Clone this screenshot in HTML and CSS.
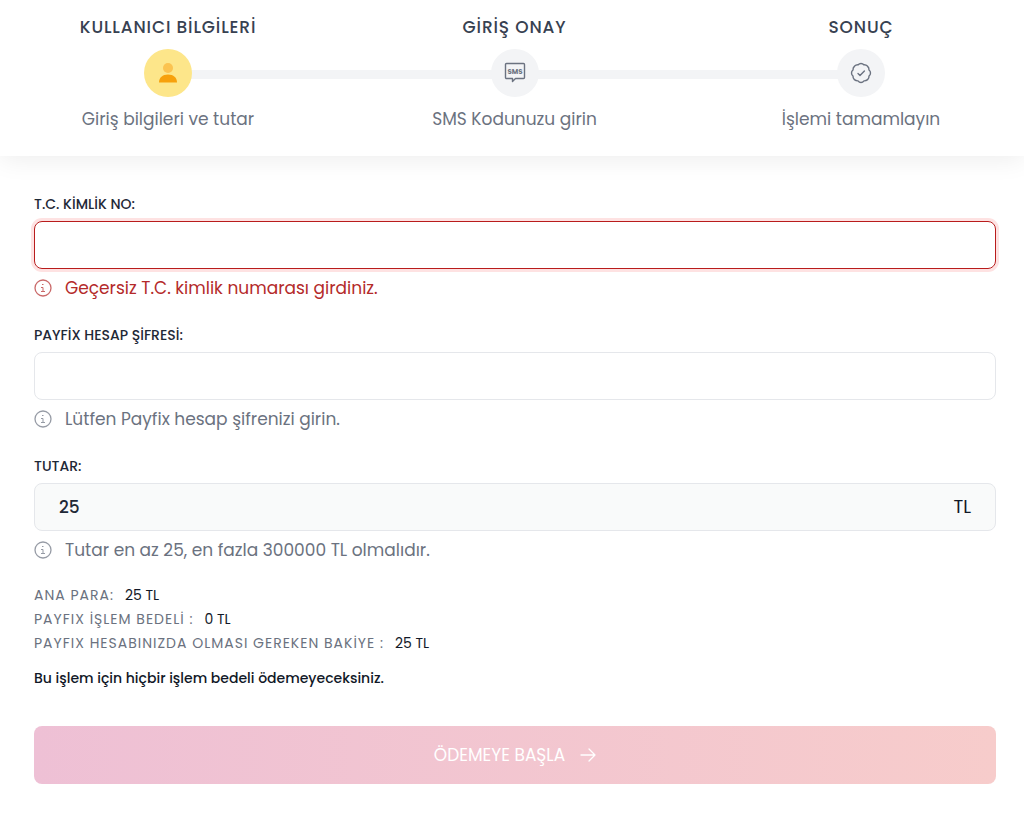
FILE: index.html
```html
<!DOCTYPE html>
<html lang="tr">
<head>
  <meta charset="utf-8">
  <meta name="viewport" content="width=device-width, initial-scale=1">
  <title>Payfix</title>
  <link rel="stylesheet" href="styles.css">
</head>

<body>

  <header class="header">
    <ol class="steps">
      <li class="step active">
        <h2>KULLANICI BİLGİLERİ</h2>
        <span class="step-icon">
          <svg width="20" height="20" viewBox="0 0 20 20">
            <circle cx="10" cy="5" r="5" fill="#fbc350"/>
            <path d="M1 19.5C1 14.5 4.500 11.500 10 11.500s9 3 9 8z" fill="#f7a10c"/>
          </svg>
        </span>
        <p>Giriş bilgileri ve tutar</p>
      </li>
      <li class="step">
        <h2>GİRİŞ ONAY</h2>
        <span class="step-icon">
          <svg width="22" height="22" viewBox="0 0 22 22" fill="none" stroke="#6b7280">
            <path d="M3 1.500h16.500a1 1 0 0 1 1 1v13a1 1 0 0 1-1 1h-8L8.500 19.500v-3H2.500a1 1 0 0 1-1-1v-13a1 1 0 0 1 1-1z" stroke-width="1.400" stroke-linejoin="round"/>
            <text class="sms" x="11" y="11.500" text-anchor="middle">SMS</text>
          </svg>
        </span>
        <p>SMS Kodunuzu girin</p>
      </li>
      <li class="step">
        <h2>SONUÇ</h2>
        <span class="step-icon">
          <svg width="22" height="22" viewBox="0 0 22 22" fill="none" stroke="#6b7280" stroke-width="1.400" stroke-linecap="round" stroke-linejoin="round">
            <path d="M11 1.500Q12.800 1.500 13.800 2.800Q16 2.600 17.400 4.100Q19.200 5.600 19 8Q20.500 9.200 20.500 11Q20.500 12.900 19 14Q19.200 16.200 17.600 17.600Q16 19 14 18.900Q12.800 20.500 11 20.500Q9.200 20.500 8 18.900Q6 19 4.400 17.600Q2.800 16.200 3 14Q1.500 12.900 1.500 11Q1.500 9.200 3 8Q2.800 5.600 4.600 4.100Q6 2.600 8.200 2.800Q9.200 1.500 11 1.500z"/>
            <path d="M8 11.500l2 2 4.400-4.400"/>
          </svg>
        </span>
        <p>İşlemi tamamlayın</p>
      </li>
    </ol>
  </header>

  <form class="payment">

    <div class="field invalid">
      <label for="identity">T.C. KİMLİK NO:</label>
      <div class="control"><input id="identity" type="text" aria-describedby="identity-hint"></div>
      <p class="hint" id="identity-hint">
        <svg width="18" height="18" viewBox="0 0 18 18" fill="none" stroke="currentColor">
          <circle cx="9" cy="9" r="8" stroke-width="1.300"/>
          <path d="M7 8.500h2v4M7 12.500h4M8 5.500h1.500"/>
        </svg>
        <span>Geçersiz T.C. kimlik numarası girdiniz.</span>
      </p>
    </div>

    <div class="field">
      <label for="password">PAYFİX HESAP ŞİFRESİ:</label>
      <div class="control"><input id="password" type="password" aria-describedby="password-hint"></div>
      <p class="hint" id="password-hint">
        <svg width="18" height="18" viewBox="0 0 18 18" fill="none" stroke="currentColor">
          <circle cx="9" cy="9" r="8" stroke-width="1.300"/>
          <path d="M7 8.500h2v4M7 12.500h4M8 5.500h1.500"/>
        </svg>
        <span>Lütfen Payfix hesap şifrenizi girin.</span>
      </p>
    </div>

    <div class="field filled">
      <label for="amount">TUTAR:</label>
      <div class="control">
        <input id="amount" type="text" value="25" aria-describedby="amount-hint">
        <span class="currency">TL</span>
      </div>
      <p class="hint" id="amount-hint">
        <svg width="18" height="18" viewBox="0 0 18 18" fill="none" stroke="currentColor">
          <circle cx="9" cy="9" r="8" stroke-width="1.300"/>
          <path d="M7 8.500h2v4M7 12.500h4M8 5.500h1.500"/>
        </svg>
        <span>Tutar en az 25, en fazla 300000 TL olmalıdır.</span>
      </p>
    </div>

    <dl class="summary">
      <div><dt>ANA PARA:</dt><dd>25 TL</dd></div>
      <div><dt>PAYFIX İŞLEM BEDELİ :</dt><dd>0 TL</dd></div>
      <div><dt>PAYFIX HESABINIZDA OLMASI GEREKEN BAKİYE :</dt><dd>25 TL</dd></div>
    </dl>

    <p class="note">Bu işlem için hiçbir işlem bedeli ödemeyeceksiniz.</p>

    <button class="submit" type="submit" disabled>
      <span>ÖDEMEYE BAŞLA</span>
      <svg width="16" height="16" viewBox="0 0 16 16" fill="none" stroke="currentColor" stroke-width="1.300" stroke-linecap="round" stroke-linejoin="round">
        <path d="M1 8h14M9 2l6 6-6 6"/>
      </svg>
    </button>

  </form>

</body>
</html>
```
FILE: styles.css
```css
*{
  box-sizing: border-box;
  margin: 0;
  padding: 0;
}

body{
  background-color: #fff;
  font-family: Poppins, Inter, sans-serif;
  font-size: 17px;
  line-height: 24px;
  color: #111827;
}

/* steps */
.header{
  padding: 15px 77px 25px 82px;
  box-shadow: 0 4px 24px rgba(0,0,0,.07);
}

.steps{
  position: relative;
  display: flex;
  justify-content: space-between;
  list-style: none;
}

/* line behind the circles */
.steps::before{
  content: "";
  position: absolute;
  top: 55px;
  left: 86px;
  right: 86px;
  height: 9px;
  background-color: #f3f4f6;
}

.step{
  position: relative;
  display: flex;
  flex-direction: column;
  align-items: center;
  gap: 10px;
  width: 172px;
  white-space: nowrap;
}

.step h2{
  font-size: 17px;
  font-weight: 500;
  letter-spacing: .05em;
  color: #374151;
}

.step p{
  color: #6b7280;
}

.step-icon{
  display: flex;
  align-items: center;
  justify-content: center;
  width: 48px;
  height: 48px;
  border-radius: 50%;
  background-color: #f3f4f6;
}

.active .step-icon{
  background-color: #fde68a;
}

.sms{
  font-size: 7px;
  font-weight: 700;
  fill: #6b7280;
  stroke: none;
}

/* form */
.payment{
  padding: 38px 28px 33px 34px;
}

.field{
  margin-bottom: 25px;
}

.field label{
  display: block;
  margin-bottom: 7px;
  font-size: 14px;
  font-weight: 500;
  line-height: 20px;
  color: #1f2937;
}

.control{
  display: flex;
  align-items: center;
  height: 48px;
  margin-bottom: 7px;
  padding: 0 24px;
  border: 1px solid #e5e7eb;
  border-radius: 8px;
}

.control input{
  flex: 1;
  min-width: 0;
  height: 100%;
  border: 0;
  outline: 0;
  background: none;
  font: inherit;
  font-weight: 500;
  color: #1f2937;
}

.currency{
  font-size: 18px;
}

.filled .control{
  background-color: #f9fafa;
}

.invalid .control{
  border-color: #b91c1c;
  box-shadow: 0 0 0 3px #fee2e2;
}

.hint{
  display: flex;
  align-items: center;
  gap: 13px;
  color: #6b7280;
}

.hint svg{
  flex: none;
  opacity: .7;
}

.invalid .hint{
  color: #b42a2a;
}

.summary{
  margin-top: -4px;
  font-size: 14px;
}

.summary div{
  display: flex;
  gap: 11px;
}

.summary dt{
  letter-spacing: 1px;
  color: #6b7280;
}

.note{
  margin: 11px 0 36px;
  font-size: 14px;
  font-weight: 500;
}

.submit{
  display: flex;
  align-items: center;
  justify-content: center;
  gap: 15px;
  width: 100%;
  height: 58px;
  border: 0;
  border-radius: 8px;
  background-image: linear-gradient(to right, #eec0d5, #f7cccb);
  font: inherit;
  color: #fff;
}
```
